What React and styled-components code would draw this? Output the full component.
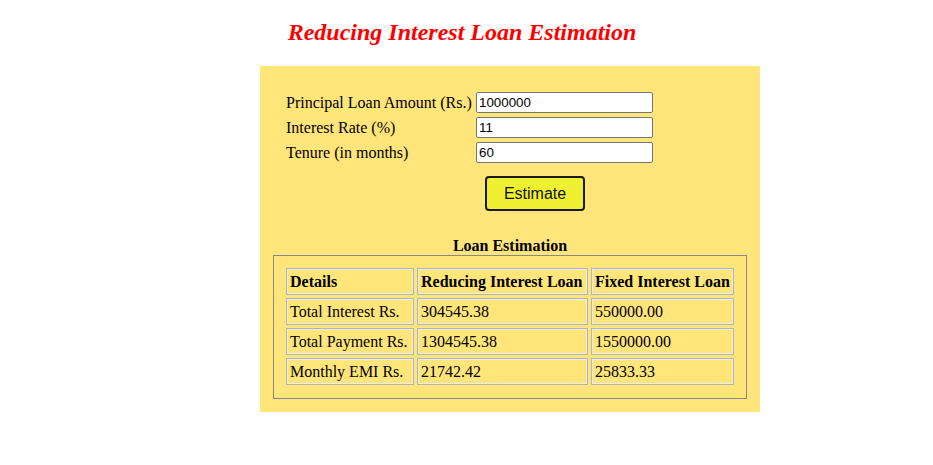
import React from "react";
import styled, { createGlobalStyle } from "styled-components";

const GlobalStyle = createGlobalStyle`
  body {
    margin: 0;
    background: #ffffff;
    font-family: "Liberation Serif", "Times New Roman", serif;
    font-size: 16px;
    color: #000;
  }
`;

const Page = styled.div`
  padding: 0 8px;
`;

const Title = styled.h2`
  margin: 18px 9px 20px 0;
  text-align: center;
  color: #ff0000;
  font-size: 24px;
  line-height: 28px;
  font-weight: bold;
  font-style: italic;
`;

const Panel = styled.div`
  margin-left: 252px;
  width: 500px;
  box-sizing: border-box;
  background: #ffe57a;
  padding: 13px;
`;

const Form = styled.div`
  padding: 13px 0 0 13px;
  display: grid;
  grid-template-columns: 190px 177px;
  grid-auto-rows: 21px;
  row-gap: 4px;
  align-items: center;
`;

const Label = styled.label`
  line-height: 19px;
  white-space: nowrap;
`;

const Input = styled.input`
  box-sizing: border-box;
  width: 177px;
  height: 21px;
  margin: 0;
  padding: 1px 2px;
  border: 1px solid #767676;
  border-radius: 2px;
  background: #fff;
  font-family: "Liberation Sans", Arial, sans-serif;
  font-size: 13.33px;
  color: #000;
`;

const ButtonRow = styled.div`
  padding: 13px 0 0 212px;
`;

const Button = styled.button`
  box-sizing: border-box;
  width: 100px;
  height: 35px;
  margin: 0;
  background: #f0f033;
  border: 2px solid #1a1a1a;
  border-radius: 4px;
  font-family: "Liberation Sans", Arial, sans-serif;
  font-size: 16px;
  color: #111;
  cursor: pointer;
`;

const Caption = styled.div`
  margin-top: 25px;
  text-align: center;
  font-weight: bold;
  line-height: 19px;
`;

const TableBox = styled.div`
  border: 1px solid #888888;
  padding: 9px 9px 10px;
`;

const Table = styled.table`
  width: 100%;
  table-layout: fixed;
  border-collapse: separate;
  border-spacing: 3px;
`;

const Cell = styled.td`
  border: 1px solid #b4b4b4;
  box-shadow: inset 0 0 0 1px #ececec;
  padding: 3px;
  line-height: 19px;
  white-space: nowrap;
  font-weight: ${(p) => (p.$head ? "bold" : "normal")};
  text-align: left;
`;

const rows = [
  ["Total Interest Rs.", "304545.38", "550000.00"],
  ["Total Payment Rs.", "1304545.38", "1550000.00"],
  ["Monthly EMI Rs.", "21742.42", "25833.33"],
];

export default function App() {
  return (
    <Page>
      <GlobalStyle />
      <Title>Reducing Interest Loan Estimation</Title>
      <Panel>
        <Form>
          <Label>Principal Loan Amount (Rs.)</Label>
          <Input defaultValue="1000000" />
          <Label>Interest Rate (%)</Label>
          <Input defaultValue="11" />
          <Label>Tenure (in months)</Label>
          <Input defaultValue="60" />
        </Form>
        <ButtonRow>
          <Button>Estimate</Button>
        </ButtonRow>
        <Caption>Loan Estimation</Caption>
        <TableBox>
          <Table>
            <colgroup>
              <col style={{ width: 128 }} />
              <col style={{ width: 171 }} />
              <col style={{ width: 143 }} />
            </colgroup>
            <thead>
              <tr>
                <Cell as="th" $head>Details</Cell>
                <Cell as="th" $head>Reducing Interest Loan</Cell>
                <Cell as="th" $head>Fixed Interest Loan</Cell>
              </tr>
            </thead>
            <tbody>
              {rows.map((r) => (
                <tr key={r[0]}>
                  {r.map((c, i) => (
                    <Cell key={i}>{c}</Cell>
                  ))}
                </tr>
              ))}
            </tbody>
          </Table>
        </TableBox>
      </Panel>
    </Page>
  );
}
